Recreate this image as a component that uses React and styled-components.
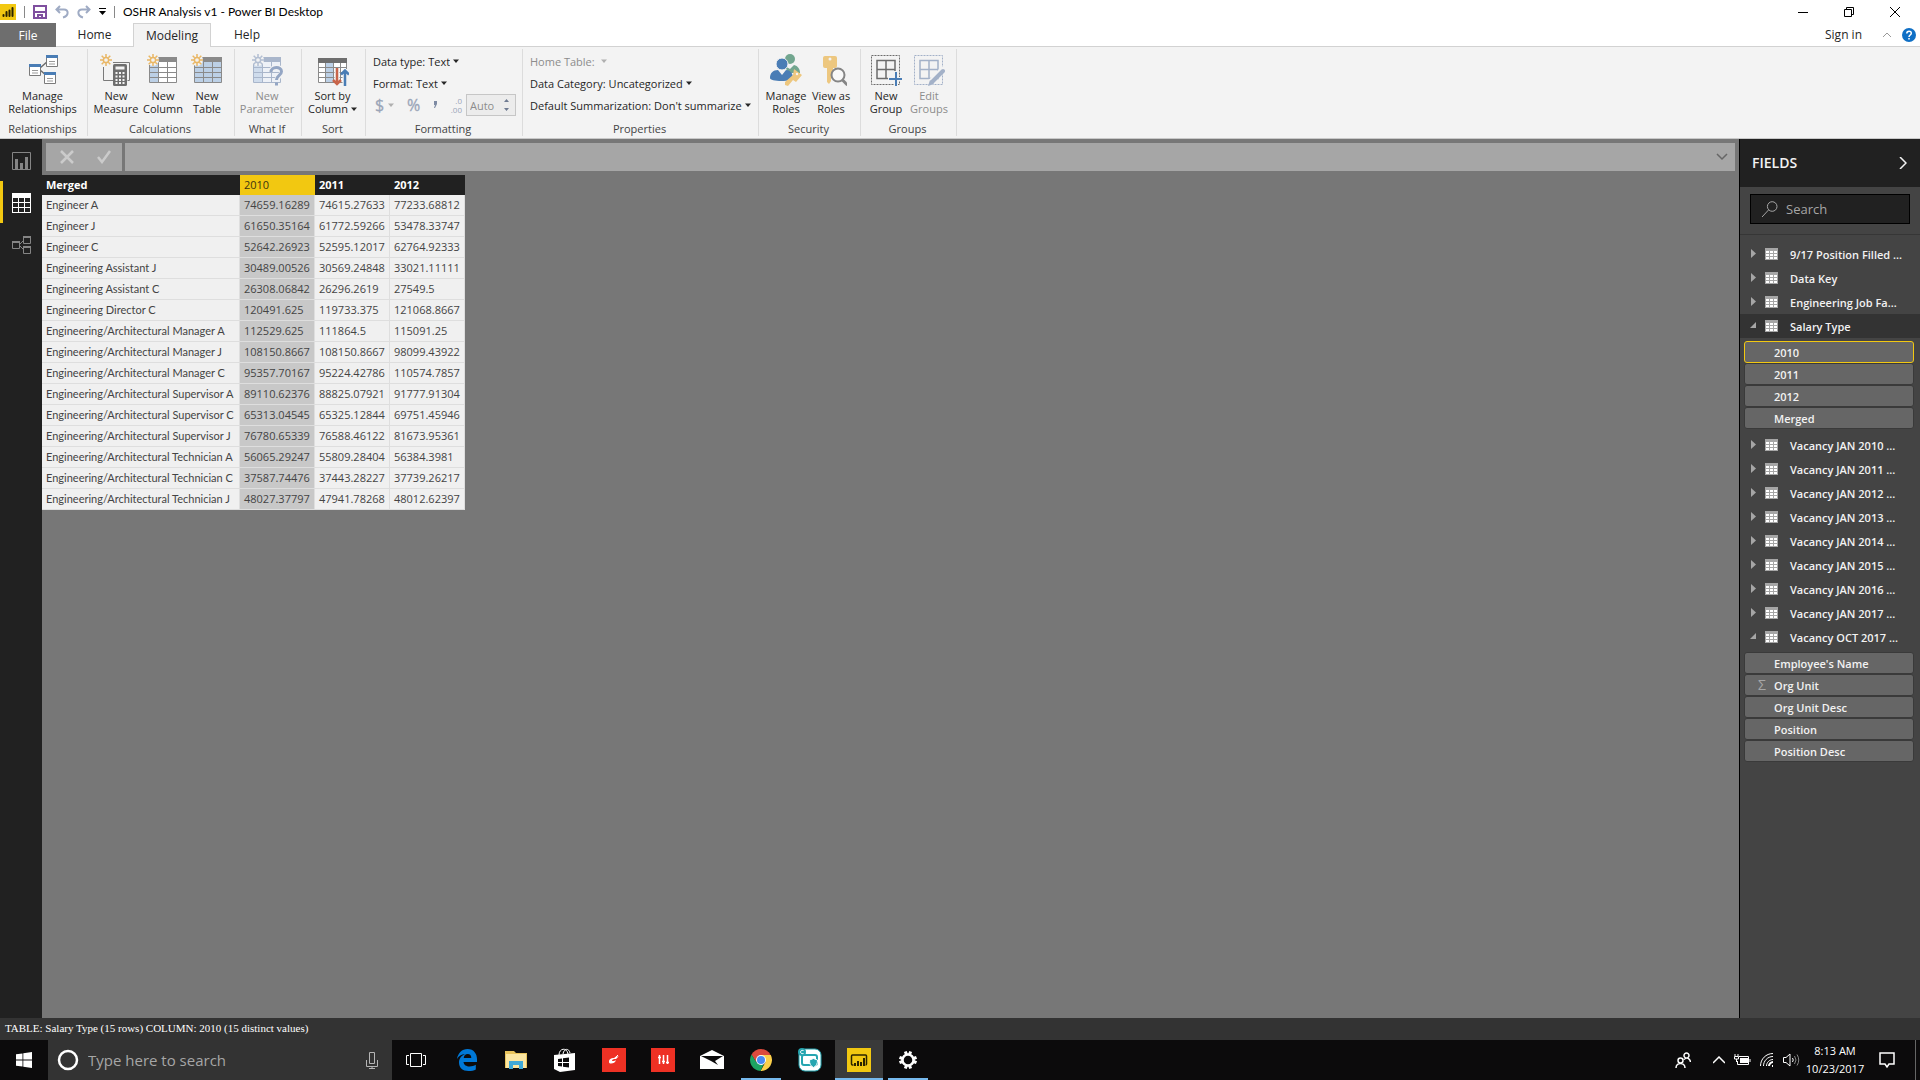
import React from "react";
import styled, { createGlobalStyle, css } from "styled-components";

const GlobalStyle = createGlobalStyle`
  * {
    box-sizing: border-box;
  }

  body {
    margin: 0;
    font-family: "Open Sans", "Noto Sans", sans-serif;
    font-size: 11px;
    color: #262626;
    background: #777;
  }

  button, input, select {
    margin: 0;
    padding: 0;
    border: 0;
    border-radius: 0;
    background: none;
    font: inherit;
    color: inherit;
    opacity: 1;
  }

  svg {
    display: block;
    flex: none;
  }
`;

const Window = styled.div`
  display: flex;
  flex-direction: column;
  min-height: 100vh;
`;

/* title bar */

const TitleBar = styled.header`
  display: flex;
  align-items: center;
  height: 23px;
  padding-right: 2px;
  background: #fff;
  color: #000;
`;

const QuickAccess = styled.div`
  display: flex;
  align-items: center;
  gap: 8px;
  margin-right: 8px;
`;

const IconButton = styled.button`
  display: flex;
  align-items: center;
  justify-content: center;
  color: ${(props) => props.$color || "inherit"};
`;

const Divider = styled.span`
  width: 1px;
  height: 12px;
  background: #888;
`;

const Title = styled.h1`
  flex: 1;
  margin: 0;
  font-family: Lato, "Open Sans", sans-serif;
  font-size: 12px;
  font-weight: 400;
`;

const WindowButton = styled(IconButton)`
  width: 46px;
  height: 22px;
`;

/* ribbon */

const TabBar = styled.nav`
  display: flex;
  align-items: stretch;
  height: 24px;
  background: #fff;
  border-bottom: 1px solid #d2d2d2;
`;

const Tab = styled.button`
  width: ${(props) => props.$width}px;
  font-size: 12px;

  ${(props) =>
    props.$file &&
    css`
      margin-bottom: -1px;
      background: #6e6e6e;
      color: #fff;
    `}

  ${(props) =>
    props.$active &&
    css`
      margin-bottom: -1px;
      border: 1px solid #d2d2d2;
      border-bottom: 0;
      background: #f3f3f3;
    `}
`;

const Account = styled.div`
  display: flex;
  align-items: center;
  gap: 10px;
  margin-left: auto;
  padding-right: 4px;
`;

const SignIn = styled.button`
  margin-right: 10px;
  font-size: 12px;
`;

const Ribbon = styled.section`
  display: flex;
  height: 92px;
  padding: 2px 0;
  background: #f3f3f3;
  border-bottom: 1px solid #c8c8c8;
`;

const Group = styled.section`
  display: flex;
  flex-direction: column;
  flex: none;
  width: ${(props) => props.$width}px;
  border-right: 1px solid #dcdcdc;
`;

const GroupBody = styled.div`
  display: flex;
  justify-content: center;
  flex: 1;
  padding-right: 2px;
`;

const GroupStack = styled.div`
  display: flex;
  flex-direction: column;
  flex: 1;
  padding: 1px 6px 0 7px;
`;

const GroupLabel = styled.h2`
  margin: 0;
  height: 14px;
  padding-right: 2px;
  line-height: 14px;
  font-size: 11px;
  font-weight: 400;
  text-align: center;
  color: #444;
`;

const Tool = styled.button`
  display: flex;
  flex-direction: column;
  align-items: center;
  width: ${(props) => props.$width}px;
  padding-top: 5px;
  line-height: 13px;
  white-space: nowrap;
  color: ${(props) => (props.disabled ? "#8c8c8c" : "#262626")};

  svg {
    margin-bottom: 3px;
  }
`;

const ToolLine = styled.span`
  display: flex;
  align-items: center;
  gap: 3px;

  svg {
    margin: 0;
  }
`;

const Choice = styled.label`
  display: flex;
  align-items: center;
  height: 22px;
  gap: 3px;
  white-space: nowrap;
  color: ${(props) => (props.$off ? "#8c8c8c" : "#262626")};

  select {
    appearance: none;
    field-sizing: content;
  }
`;

const FormatRow = styled.div`
  display: flex;
  align-items: center;
  gap: 4px;
  height: 22px;
  padding-left: 2px;
  color: #9aa5b8;
`;

const FormatButtons = styled.div`
  display: flex;
  align-items: center;
  justify-content: space-between;
  flex: 1;
`;

const FormatButton = styled.button`
  display: flex;
  align-items: center;
  gap: 4px;
  font-size: 16px;
  line-height: 20px;
  -webkit-text-stroke: 0.3px currentColor;
`;

const DecimalLabel = styled.span`
  display: flex;
  flex-direction: column;
  align-items: flex-end;
  font-size: 8px;
  line-height: 9px;
`;

const Spinner = styled.span`
  display: flex;
  align-items: center;
  flex: none;
  width: 50px;
  height: 22px;
  padding: 0 6px 0 3px;
  border: 1px solid #c6c6c6;
  background: #ececec;
  color: #6f7b92;

  input {
    flex: 1;
    min-width: 0;
    color: #8c8c8c;
  }
`;

/* work area */

const Workspace = styled.div`
  display: flex;
  flex: 1;
`;

const ViewBar = styled.nav`
  flex: none;
  width: 42px;
  background: #212121;
`;

const ViewButton = styled.button`
  display: flex;
  align-items: center;
  width: 100%;
  height: 42px;
  padding: 2px 0 0 9px;
  border-left: 3px solid ${(props) => (props.$active ? "#f2c811" : "transparent")};
  color: ${(props) => (props.$active ? "#fff" : "#858585")};
`;

const DataView = styled.main`
  flex: 1;
  min-width: 0;
  background: #777;
`;

const FormulaBar = styled.div`
  display: flex;
  gap: 3px;
  padding: 4px 4px 4px;
`;

const FormulaActions = styled.div`
  display: flex;
  align-items: center;
  justify-content: space-around;
  width: 76px;
  height: 28px;
  padding-left: 3px;
  background: #a6a6a6;
  color: #cbcbcb;
`;

const FormulaField = styled.div`
  display: flex;
  align-items: center;
  flex: 1;
  padding-right: 7px;
  background: #a6a6a6;
  color: #666;

  input {
    flex: 1;
    height: 100%;
    padding: 0 8px;
  }
`;

const DataTable = styled.table`
  table-layout: fixed;
  width: 423px;
  border-collapse: separate;
  border-spacing: 0;
  line-height: 16px;
  white-space: nowrap;
`;

const HeadCell = styled.th`
  width: ${(props) => props.$width}px;
  height: 20px;
  padding: 0 4px;
  text-align: left;
  font-weight: ${(props) => (props.$selected ? 400 : 700)};
  color: ${(props) => (props.$selected ? "#3c3410" : "#fff")};
  background: ${(props) => (props.$selected ? "#f2c811" : "#212121")};
`;

const Cell = styled.td`
  height: 21px;
  padding: 0 0 0 4px;
  font-family: ${(props) => (props.$name ? "Lato, sans-serif" : "inherit")};
  color: #444;
  background: ${(props) => (props.$selected ? "#c8c8c8" : "#f0f0f0")};
  border-right: 1px solid #dedede;
  border-bottom: 1px solid #dedede;
`;

/* fields pane */

const Pane = styled.aside`
  flex: none;
  width: 181px;
  border-left: 1px solid #000;
  background: #444;
  color: #f2f2f2;
`;

const PaneHeader = styled.div`
  display: flex;
  align-items: center;
  justify-content: space-between;
  height: 48px;
  padding: 0 13px 0 12px;
  background: #212121;
`;

const PaneTitle = styled.h2`
  margin: 0;
  font-size: 14px;
  line-height: 18px;
  font-weight: 600;
`;

const SearchArea = styled.div`
  padding: 7px 10px 10px;
  border-bottom: 1px solid #363636;
`;

const SearchBox = styled.label`
  display: flex;
  align-items: center;
  gap: 8px;
  height: 30px;
  padding: 0 11px;
  border: 1px solid #000;
  background: #212121;
  color: #a6a6a6;

  input {
    min-width: 0;
    width: 100%;
    font-size: 13px;
  }

  input::placeholder {
    color: #a6a6a6;
    opacity: 1;
  }
`;

const TableList = styled.ul`
  margin: 0;
  padding: 7px 0 0;
  list-style: none;
  font-weight: 600;
`;

const TableRow = styled.button`
  display: flex;
  align-items: center;
  width: 100%;
  height: 24px;
  padding-left: 10px;
  white-space: nowrap;
  background: ${(props) => (props.$active ? "#333" : "transparent")};

  svg + svg {
    margin: 0 12px 0 8px;
  }
`;

const FieldList = styled.ul`
  margin: 0;
  padding: 3px 6px 4px 4px;
  list-style: none;
`;

const Field = styled.button`
  display: flex;
  align-items: center;
  width: 100%;
  height: 22px;
  border: 1px solid ${(props) => (props.$selected ? "#f2c811" : "#3a3a3a")};
  border-radius: 3px;
  background: #666;
`;

const FieldMark = styled.span`
  width: 29px;
  padding-left: 13px;
  font-size: 14px;
  line-height: 16px;
  font-weight: 400;
  text-align: left;
  color: #a6a6a6;
`;

const StatusBar = styled.footer`
  height: 22px;
  padding-left: 5px;
  line-height: 21px;
  font-family: "Liberation Serif", serif;
  font-size: 11px;
  color: #fff;
  background: #333;
`;

/* taskbar */

const Taskbar = styled.footer`
  display: flex;
  height: 40px;
  background: #0c0b0c;
  color: #fff;
`;

const TaskButton = styled.button`
  display: flex;
  align-items: center;
  justify-content: center;
  width: 48px;
  margin-right: 1px;
  background: ${(props) => (props.$active ? "#3a3a3a" : "transparent")};
  border-bottom: 2px solid ${(props) => (props.$active ? "#76b9ed" : "transparent")};
  border-top: 2px solid transparent;

  ${(props) =>
    props.$running &&
    css`
      width: 40px;
      margin: 0 5px 0 4px;
      border-bottom-color: #76b9ed;
    `}
`;

const StartButton = styled(TaskButton)`
  margin-right: 0;
`;

const TaskViewButton = styled(TaskButton)`
  margin-right: 3px;
`;

const TaskSearch = styled.label`
  display: flex;
  align-items: center;
  width: 344px;
  padding: 0 14px 0 9px;
  background: #333;

  input {
    flex: 1;
    padding-left: 9px;
    font-size: 15px;
  }

  input::placeholder {
    color: #a6a6a6;
    opacity: 1;
  }
`;

const Tray = styled.div`
  display: flex;
  align-items: center;
  margin-left: auto;
  padding-right: 4px;
`;

const TrayIcons = styled.div`
  display: flex;
  align-items: center;
  gap: 9px;
  margin-right: 5px;
`;

const People = styled(IconButton)`
  margin-right: 13px;
`;

const Clock = styled.time`
  width: 60px;
  font-size: 11px;
  line-height: 18px;
  text-align: center;
  white-space: nowrap;
`;

const Notifications = styled(IconButton)`
  padding: 0 20px 0 14px;
  height: 100%;
  border-right: 1px solid #666;
`;

/* icons */

const Caret = ({ color = "#262626" }) => (
  <svg width="6" height="4" viewBox="0 0 6 4">
    <path d="M0 .5h6L3 4z" fill={color} />
  </svg>
);

const PowerBiLogo = () => (
  <svg width="16" height="16" viewBox="0 0 16 16">
    <path fill="#f2c811" d="M0 0h16v16H0z" />
    <path
      stroke="#2b2400"
      strokeWidth="2"
      strokeLinecap="round"
      d="M3.500 12v-1M6.500 12V8M9.500 12V6.500M12.500 12V4"
    />
  </svg>
);

const SaveIcon = () => (
  <svg width="14" height="14" viewBox="0 0 14 14">
    <path fill="none" stroke="#7f4f9f" strokeWidth="2" d="M1 1h12v12H1zM2 7h10" />
    <path fill="#7f4f9f" d="M4 9h6v4H8v-2H6v2H4z" />
  </svg>
);

const UndoIcon = ({ flip }) => (
  <svg width="14" height="14" viewBox="0 0 14 14">
    <path
      fill="none"
      stroke="#9fabc4"
      strokeWidth="2"
      transform={flip ? "matrix(-1 0 0 1 14 0)" : undefined}
      d="M5 1L1.500 4.500 5 8M2 4.500h7c5 0 5 6.500-1 8"
    />
  </svg>
);

const Sun = ({ x = 6, color = "#e9b765" }) => (
  <g transform={`translate(${x} 6)`} stroke={color} fill="none" strokeWidth="1.500">
    <circle r="2.600" />
    <path d="M0-6v3M0 3v3M-6 0h3M3 0h3M-4.300-4.300l2 2M2.300 2.300l2 2M-4.300 4.300l2-2M2.300-2.300l2-2" />
  </g>
);

const Grid = ({ x, y = 3, fill = "#fff", column = "#bcd0e6", line = "#8a8a8a" }) => (
  <g transform={`translate(${x} ${y})`}>
    <path fill={fill} d="M.5.5h27v25H.5z" />
    <path fill={column} d="M1 5h8v20H1z" />
    <path stroke={line} fill="none" d="M.5.5h27v25H.5zM9.500 5v20M18.500 5v20M1 10.500h26M1 15.500h26M1 20.500h26" />
    <path fill={line} d="M0 0h28v5H0z" />
  </g>
);

const ToolSvg = ({ children }) => (
  <svg width="32" height="32" viewBox="0 0 32 32">
    {children}
  </svg>
);

const MiniTable = ({ x, y }) => (
  <g transform={`translate(${x} ${y})`}>
    <path fill="#fff" stroke="#7a7a7a" d="M.5.5h11v11H.5z" />
    <path fill="#4a7db5" d="M0 0h12v3H0z" />
    <path stroke="#9a9a9a" d="M3 6.500h6M3 9h6" />
  </g>
);

const RelationshipsIcon = () => (
  <ToolSvg>
    <path stroke="#6c6c6c" strokeWidth="1.500" d="M13 14l8-7M13 16l7 6" />
    <MiniTable x={19} y={1} />
    <MiniTable x={2} y={10} />
    <MiniTable x={17} y={18} />
  </ToolSvg>
);

const MeasureIcon = () => (
  <ToolSvg>
    <path fill="none" stroke="#7a7a7a" d="M3.500 13v13.500H13M13 8.500h16.500V26.500h-2" />
    <Sun />
    <rect x="13" y="10" width="14" height="22" rx="1.500" fill="#6e6e6e" />
    <path fill="#f3f3f3" d="M15.500 12.500h9v3h-9z" />
    <path
      stroke="#f3f3f3"
      strokeWidth="2"
      strokeDasharray="2 1.500"
      d="M15.500 19h9M15.500 22.500h9M15.500 26h9M15.500 29h9"
    />
  </ToolSvg>
);

const ColumnIcon = () => (
  <ToolSvg>
    <Grid x={2} />
    <circle cx="6" cy="6" r="6" fill="#f3f3f3" />
    <Sun />
  </ToolSvg>
);

const TableIcon = () => (
  <ToolSvg>
    <Grid x={3} fill="#bcd0e6" />
    <circle cx="6" cy="6" r="6" fill="#f3f3f3" />
    <Sun />
  </ToolSvg>
);

const ParameterIcon = () => (
  <ToolSvg>
    <Grid x={2} fill="#edf1f7" column="#cfdcec" line="#a9b6cb" />
    <circle cx="7" cy="6" r="6" fill="#f3f3f3" />
    <Sun x={7} color="#b3bfd2" />
    <path fill="none" stroke="#f3f3f3" strokeWidth="5" d="M20 18c0-6 11-6 11-.5 0 4-5 4-5 8.500" />
    <path fill="none" stroke="#94a6c4" strokeWidth="3" d="M20 18c0-6 10.500-6 10.500-.5 0 4-5 4-5 8.500M25.500 28.500v3" />
  </ToolSvg>
);

const SortIcon = () => (
  <ToolSvg>
    <g transform="translate(1 4)">
      <path fill="#fff" stroke="#8a8a8a" d="M.5.5h28v24H.5z" />
      <path fill="#bcd0e6" d="M8 5h7v19H8z" />
      <path stroke="#8a8a8a" d="M7.500 5v19M15.500 5v19M22.500 5v19M1 9.500h27M1 14.500h27M1 19.500h27" />
      <path fill="#6e6e6e" d="M0 0h29v5H0z" />
    </g>
    <path fill="none" stroke="#f3f3f3" strokeWidth="5" d="M20 14v18M28 32V15" />
    <path fill="none" stroke="#c8644a" strokeWidth="2.500" d="M20 14v16M16 26l4 4 4-4" />
    <path fill="none" stroke="#4a7db5" strokeWidth="2.500" d="M28 32V17M24 20.500l4-4 4 4" />
  </ToolSvg>
);

const RolesIcon = () => (
  <ToolSvg>
    <circle cx="20" cy="5" r="5" fill="#72a68f" />
    <path fill="#72a68f" d="M15 12l5 3 4-4c4 1 6 4 6 8H18z" />
    <circle cx="12" cy="10" r="6" fill="#4a7db5" stroke="#f3f3f3" />
    <path fill="#4a7db5" d="M0 24c0-5 3-8 8-8l4 5 4-5c4 0 7 3 7 8 0 2-5 3-11.500 3S0 26 0 24z" />
    <path stroke="#f3f3f3" strokeWidth="6" d="M18 31l8-8" />
    <path fill="#edc77f" d="M24 15l8 6-6 7-3-2-5 6-3-1v-3l8-7z" />
    <circle cx="27" cy="20" r="1.200" fill="#f3f3f3" />
  </ToolSvg>
);

const ViewAsIcon = () => (
  <ToolSvg>
    <rect x="8" y="2" width="14" height="12" rx="2" fill="#edc77f" />
    <path fill="#edc77f" d="M12 14h6v5h-2v8l-2 3-2-2z" />
    <circle cx="15" cy="5" r="1.500" fill="#f3f3f3" />
    <circle cx="23" cy="21" r="6.500" fill="#f8f8f8" stroke="#858585" strokeWidth="2" />
    <path stroke="#858585" strokeWidth="3" d="M27.500 26l5 5" />
  </ToolSvg>
);

const GroupIcon = ({ edit }) => (
  <ToolSvg>
    <g fill="none" stroke={edit ? "#a3b1c8" : "#6c6c6c"}>
      <path strokeDasharray="2 1" d="M1.500 1.500h28v29h-28z" />
      <path strokeWidth="1.500" d="M7 6.500h18v18H7zM16 6.500v18M7 15.500h18" />
    </g>
    {edit ? (
      <>
        <path stroke="#f3f3f3" strokeWidth="6" d="M31 14L16 30" />
        <path stroke="#a3b1c8" strokeWidth="4" strokeLinecap="round" d="M30 17L19 28" />
        <path fill="#a3b1c8" d="M17 26l4 4-6 2z" />
      </>
    ) : (
      <>
        <path stroke="#f3f3f3" strokeWidth="4" d="M26 17v15M18 25h14" />
        <path stroke="#4a7db5" strokeWidth="2" d="M26 18v14M19 25h13" />
      </>
    )}
  </ToolSvg>
);

const ReportView = () => (
  <svg width="19" height="19" viewBox="0 0 19 19">
    <path fill="none" stroke="currentColor" d="M.5.5h18v17H.5z" />
    <path stroke="currentColor" strokeWidth="3" d="M4.500 17V7M9.500 17v-6M14.500 17V5" />
  </svg>
);

const TableView = () => (
  <svg width="19" height="20" viewBox="0 0 19 20">
    <path fill="currentColor" d="M0 0h19v20H0z" />
    <path
      fill="#212121"
      d="M1 5h5v4H1zM7 5h5v4H7zM13 5h5v4h-5zM1 10h5v4H1zM7 10h5v4H7zM13 10h5v4h-5zM1 15h5v4H1zM7 15h5v4H7zM13 15h5v4h-5z"
    />
  </svg>
);

const ModelView = () => (
  <svg width="19" height="18" viewBox="0 0 19 18">
    <path fill="none" stroke="currentColor" d="M.5 5.500h7v7h-7zM11.500.5h7v7h-7zM11.500 10.500h7v7h-7zM8 8l3-3M8 10l3 3" />
    <path fill="currentColor" d="M0 5h8v2H0zM11 0h8v2h-8zM11 10h8v2h-8z" />
  </svg>
);

const Line = ({ d, w = 12, h = 12, weight = 1 }) => (
  <svg width={w} height={h} viewBox={`0 0 ${w} ${h}`}>
    <path fill="none" stroke="currentColor" strokeWidth={weight} d={d} />
  </svg>
);

const Expander = ({ open }) => (
  <svg width="7" height="10" viewBox="0 0 7 10">
    <path fill="#a6a6a6" d={open ? "M6 1v6H0z" : "M1 0l5 4.500L1 9z"} />
  </svg>
);

const FieldTableIcon = () => (
  <svg width="13" height="12" viewBox="0 0 13 12">
    <path fill="#a6a6a6" d="M0 0h13v12H0z" />
    <path fill="#fff" d="M1 3h3v2H1zM5 3h3v2H5zM9 3h3v2H9zM1 6h3v2H1zM5 6h3v2H5zM9 6h3v2H9zM1 9h3v2H1zM5 9h3v2H5zM9 9h3v2H9z" />
  </svg>
);

const WindowsLogo = () => (
  <svg width="16" height="16" viewBox="0 0 16 16">
    <path fill="#fff" d="M0 2.300L6.500 1.400v6.200H0zM7.300 1.300L16 0v7.600H7.300zM0 8.400h6.500v6.200L0 13.700zM7.300 8.400H16V16l-8.700-1.300z" />
  </svg>
);

const EdgeIcon = () => (
  <svg width="22" height="22" viewBox="0 0 22 22">
    <path
      fill="#0078d7"
      d="M1 10C2 4 6 0 11.500 0 18 0 21 5 21 10v3H7.500c.3 3 3 4.500 6 4.500 2.500 0 4.500-.6 6.300-1.700v4.600C18 21.500 15.500 22 12.500 22 6.500 22 3 18.500 3 13.500 3 9.500 5.500 6.500 9 5 5.500 5.300 2.500 7 1 10zm6.700-1h7.600c0-2.500-1.300-4-3.600-4-2.200 0-3.700 1.500-4 4z"
    />
  </svg>
);

const ExplorerIcon = () => (
  <svg width="22" height="20" viewBox="0 0 22 20">
    <path fill="#e9c45c" d="M0 1h9l2 2h11v15H0z" />
    <path fill="#fbe6a2" d="M1 4h20v14H1z" />
    <path fill="#3fa9d8" d="M4 11h14v8h-4v-4H8v4H4z" />
  </svg>
);

const StoreIcon = () => (
  <svg width="22" height="24" viewBox="0 0 22 24">
    <path fill="none" stroke="#fff" d="M5 7c0-7 8-8 9-1M9 6c1-6 6-6 7-1" />
    <path fill="#fff" d="M0 7l21-2v17L6 24l-6-3z" />
    <path fill="#0c0b0c" d="M4 11l4-.5V14H4zM9 10.300l6-.8V14H9zM4 15h4v3.500L4 18zM9 15h6v4.500l-6-.8z" />
  </svg>
);

const RedTile = ({ bars }) => (
  <svg width="24" height="24" viewBox="0 0 24 24">
    <path fill="#ee3124" d="M0 0h24v24H0z" />
    {bars ? (
      <path stroke="#fff" strokeWidth="1.500" d="M8.500 7v9M12.500 7v9M16.500 7v9M7 9.500h3M11 13.500h3M15 14.500h3" />
    ) : (
      <>
        <path fill="#fff" d="M7 14c0-3 2-4 5-4l4-3-1 2 2-1-3 3c-3 0-4 .5-4 1.800 1 .7 3 0 4-.8-.5 3.500-7 5-7 2z" />
        <path stroke="#fff" d="M13 10l3-3" />
      </>
    )}
  </svg>
);

const MailIcon = () => (
  <svg width="24" height="20" viewBox="0 0 24 20">
    <path fill="#fff" d="M0 6l12-6 12 6v13H0z" />
    <path fill="#0c0b0c" d="M1 6h22l-8 5 3 4-7-4z" />
  </svg>
);

const ChromeIcon = () => (
  <svg width="22" height="22" viewBox="0 0 22 22">
    <path fill="#dd4b3e" d="M11 11L1.500 5.500A11 11 0 0 1 20.500 5.500z" />
    <path fill="#dd4b3e" d="M1.500 5.500L6 13l5-8h9.500z" />
    <path fill="#fcd04b" d="M11 6h9.800A11 11 0 0 1 10.500 22l5-9z" />
    <path fill="#1da462" d="M1.500 5.500l5 8 7 2L10.500 22A11 11 0 0 1 1.500 5.500z" />
    <circle cx="11" cy="11" r="5" fill="#fff" />
    <circle cx="11" cy="11" r="4" fill="#4a8af4" />
  </svg>
);

const SyncIcon = () => (
  <svg width="24" height="24" viewBox="0 0 24 24">
    <rect x="1" y="1" width="22" height="22" rx="6" fill="#fff" stroke="#26a5b0" />
    <rect x="4" y="7" width="15" height="10" rx="2" fill="none" stroke="#26a5b0" strokeWidth="2" />
    <circle cx="4" cy="4" r="4" fill="#26a5b0" />
    <path fill="none" stroke="#fff" d="M5.500 2.500c-4-1-4 4 0 3" />
    <path fill="#26a5b0" stroke="#fff" d="M11.500 12l4-1.500 4 1.500c0 4-1 6-4 7.500-3-1.500-4-3.500-4-7.500z" />
  </svg>
);

const PowerBiTile = () => (
  <svg width="24" height="24" viewBox="0 0 24 24">
    <path fill="#f2c811" d="M0 0h24v24H0z" />
    <path
      fill="none"
      stroke="#2b2400"
      strokeWidth="1.500"
      d="M6.500 17H5.500Q4.500 17 4.500 16V8Q4.500 7 5.500 7h13Q19.500 7 19.500 8v8q0 1-1 1"
    />
    <path stroke="#2b2400" strokeWidth="2" d="M8 18v-3M11 18v-5M14 18v-4M17 18v-8" />
  </svg>
);

const GearIcon = () => (
  <svg width="20" height="20" viewBox="0 0 20 20">
    <circle cx="10" cy="10" r="5.500" fill="none" stroke="#fff" strokeWidth="2.500" />
    <path
      stroke="#fff"
      strokeWidth="3"
      d="M8.500 4.500L7.300 1.500M11.500 4.500l1.200-3M8.500 15.500l-1.200 3M11.500 15.500l1.200 3M4.500 8.500l-3-1.200M4.500 11.500l-3 1.200M15.500 8.500l3-1.200M15.500 11.500l3 1.200"
    />
  </svg>
);

const years = ["2010", "2011", "2012"];

const rows = [
  ["Engineer A", "74659.16289", "74615.27633", "77233.68812"],
  ["Engineer J", "61650.35164", "61772.59266", "53478.33747"],
  ["Engineer C", "52642.26923", "52595.12017", "62764.92333"],
  ["Engineering Assistant J", "30489.00526", "30569.24848", "33021.11111"],
  ["Engineering Assistant C", "26308.06842", "26296.2619", "27549.5"],
  ["Engineering Director C", "120491.625", "119733.375", "121068.8667"],
  ["Engineering/Architectural Manager A", "112529.625", "111864.5", "115091.25"],
  ["Engineering/Architectural Manager J", "108150.8667", "108150.8667", "98099.43922"],
  ["Engineering/Architectural Manager C", "95357.70167", "95224.42786", "110574.7857"],
  ["Engineering/Architectural Supervisor A", "89110.62376", "88825.07921", "91777.91304"],
  ["Engineering/Architectural Supervisor C", "65313.04545", "65325.12844", "69751.45946"],
  ["Engineering/Architectural Supervisor J", "76780.65339", "76588.46122", "81673.95361"],
  ["Engineering/Architectural Technician A", "56065.29247", "55809.28404", "56384.3981"],
  ["Engineering/Architectural Technician C", "37587.74476", "37443.28227", "37739.26217"],
  ["Engineering/Architectural Technician J", "48027.37797", "47941.78268", "48012.62397"]
];

const tables = [
  { name: "9/17 Position Filled ..." },
  { name: "Data Key" },
  { name: "Engineering Job Fa..." },
  { name: "Salary Type", active: true, fields: ["2010", "2011", "2012", "Merged"] },
  { name: "Vacancy JAN 2010 ..." },
  { name: "Vacancy JAN 2011 ..." },
  { name: "Vacancy JAN 2012 ..." },
  { name: "Vacancy JAN 2013 ..." },
  { name: "Vacancy JAN 2014 ..." },
  { name: "Vacancy JAN 2015 ..." },
  { name: "Vacancy JAN 2016 ..." },
  { name: "Vacancy JAN 2017 ..." },
  {
    name: "Vacancy OCT 2017 ...",
    fields: ["Employee's Name", "Org Unit", "Org Unit Desc", "Position", "Position Desc"]
  }
];

const RibbonTool = ({ icon, top, bottom, width, disabled, menu }) => (
  <Tool $width={width} disabled={disabled}>
    {icon}
    <span>{top}</span>
    <ToolLine>
      {bottom}
      {menu && <Caret />}
    </ToolLine>
  </Tool>
);

const RibbonChoice = ({ label, value, disabled }) => (
  <Choice $off={disabled}>
    {label}
    <select disabled={disabled} defaultValue={value}>
      <option>{value}</option>
    </select>
    <Caret color={disabled ? "#b0b0b0" : "#262626"} />
  </Choice>
);

const ModelingRibbon = () => (
  <Ribbon>
    <Group $width={88}>
      <GroupBody>
        <RibbonTool width={84} icon={<RelationshipsIcon />} top="Manage" bottom="Relationships" />
      </GroupBody>
      <GroupLabel>Relationships</GroupLabel>
    </Group>
    <Group $width={147}>
      <GroupBody>
        <RibbonTool width={50} icon={<MeasureIcon />} top="New" bottom="Measure" />
        <RibbonTool width={44} icon={<ColumnIcon />} top="New" bottom="Column" />
        <RibbonTool width={44} icon={<TableIcon />} top="New" bottom="Table" />
      </GroupBody>
      <GroupLabel>Calculations</GroupLabel>
    </Group>
    <Group $width={67}>
      <GroupBody>
        <RibbonTool width={60} disabled icon={<ParameterIcon />} top="New" bottom="Parameter" />
      </GroupBody>
      <GroupLabel>What If</GroupLabel>
    </Group>
    <Group $width={64}>
      <GroupBody>
        <RibbonTool width={60} menu icon={<SortIcon />} top="Sort by" bottom="Column" />
      </GroupBody>
      <GroupLabel>Sort</GroupLabel>
    </Group>
    <Group $width={157}>
      <GroupStack>
        <RibbonChoice label="Data type:" value="Text" />
        <RibbonChoice label="Format:" value="Text" />
        <FormatRow>
          <FormatButtons>
            <FormatButton disabled>
              $ <Caret color="#b0b0b0" />
            </FormatButton>
            <FormatButton disabled>%</FormatButton>
            <FormatButton disabled aria-label="Thousands separator">
              <svg width="5" height="8" viewBox="0 0 5 8">
                <path fill="#7d8aa3" d="M1 0h3v3L2 7H1l1-3H1z" />
              </svg>
            </FormatButton>
            <DecimalLabel>
              <span>.0</span>
              <span>.00</span>
            </DecimalLabel>
          </FormatButtons>
          <Spinner>
            <input aria-label="Decimal places" defaultValue="Auto" disabled />
            <svg width="5" height="12" viewBox="0 0 5 12">
              <path fill="currentColor" d="M0 3l2.500-3L5 3zM0 9h5l-2.500 3z" />
            </svg>
          </Spinner>
        </FormatRow>
      </GroupStack>
      <GroupLabel>Formatting</GroupLabel>
    </Group>
    <Group $width={236}>
      <GroupStack>
        <RibbonChoice label="Home Table:" value="" disabled />
        <RibbonChoice label="Data Category:" value="Uncategorized" />
        <RibbonChoice label="Default Summarization:" value="Don't summarize" />
      </GroupStack>
      <GroupLabel>Properties</GroupLabel>
    </Group>
    <Group $width={102}>
      <GroupBody>
        <RibbonTool width={45} icon={<RolesIcon />} top="Manage" bottom="Roles" />
        <RibbonTool width={45} icon={<ViewAsIcon />} top="View as" bottom="Roles" />
      </GroupBody>
      <GroupLabel>Security</GroupLabel>
    </Group>
    <Group $width={96}>
      <GroupBody>
        <RibbonTool width={43} icon={<GroupIcon />} top="New" bottom="Group" />
        <RibbonTool width={43} disabled icon={<GroupIcon edit />} top="Edit" bottom="Groups" />
      </GroupBody>
      <GroupLabel>Groups</GroupLabel>
    </Group>
  </Ribbon>
);

const FieldsPane = () => (
  <Pane>
    <PaneHeader>
      <PaneTitle>FIELDS</PaneTitle>
      <IconButton aria-label="Collapse pane">
        <Line w={8} h={12} weight={1.5} d="M1 0l6 6-6 6" />
      </IconButton>
    </PaneHeader>
    <SearchArea>
      <SearchBox>
        <Line w={16} h={16} d="M6.500 9L0 16M15 5.500a4.800 4.800 0 1 1-9.600 0a4.800 4.800 0 1 1 9.600 0" />
        <input type="search" aria-label="Search fields" placeholder="Search" />
      </SearchBox>
    </SearchArea>
    <TableList>
      {tables.map((table) => (
        <li key={table.name}>
          <TableRow $active={table.active}>
            <Expander open={!!table.fields} />
            <FieldTableIcon />
            {table.name}
          </TableRow>
          {table.fields && (
            <FieldList>
              {table.fields.map((field) => (
                <li key={field}>
                  <Field $selected={field === "2010"}>
                    <FieldMark>{field === "Org Unit" ? "Σ" : ""}</FieldMark>
                    {field}
                  </Field>
                </li>
              ))}
            </FieldList>
          )}
        </li>
      ))}
    </TableList>
  </Pane>
);

const WindowsTaskbar = () => (
  <Taskbar>
    <StartButton aria-label="Start">
      <WindowsLogo />
    </StartButton>
    <TaskSearch>
      <svg width="22" height="22" viewBox="0 0 22 22">
        <circle cx="11" cy="11" r="9" fill="none" stroke="#fff" strokeWidth="2.500" />
      </svg>
      <input aria-label="Windows search" placeholder="Type here to search" />
      <svg width="12" height="17" viewBox="0 0 12 17" fill="none" stroke="#b5b5b5">
        <path d="M3.500.5h5v11h-5zM.5 8v6.500h11V8M6 14v3M3 16.500h6" />
      </svg>
    </TaskSearch>
    <TaskViewButton aria-label="Task view">
      <Line w={20} h={16} d="M4.500 1.500h11v13h-11zM3 3.500H.5v9H3M17 3.500h2.500v9H17" />
    </TaskViewButton>
    <TaskButton aria-label="Edge">
      <EdgeIcon />
    </TaskButton>
    <TaskButton aria-label="File Explorer">
      <ExplorerIcon />
    </TaskButton>
    <TaskButton aria-label="Store">
      <StoreIcon />
    </TaskButton>
    <TaskButton aria-label="Assistant">
      <RedTile />
    </TaskButton>
    <TaskButton aria-label="Settings panel">
      <RedTile bars />
    </TaskButton>
    <TaskButton aria-label="Mail">
      <MailIcon />
    </TaskButton>
    <TaskButton $running aria-label="Chrome">
      <ChromeIcon />
    </TaskButton>
    <TaskButton aria-label="Sync">
      <SyncIcon />
    </TaskButton>
    <TaskButton $active aria-label="Power BI Desktop">
      <PowerBiTile />
    </TaskButton>
    <TaskButton $running aria-label="Settings">
      <GearIcon />
    </TaskButton>
    <Tray>
      <TrayIcons>
        <People aria-label="People">
          <Line
            w={16}
            h={16}
            weight={1.5}
            d="M8 8.500a2.500 2.500 0 1 1-5 0a2.500 2.500 0 1 1 5 0M1 16c0-6 9-6 9 0M14 3.500a2.500 2.500 0 1 1-5 0a2.500 2.500 0 1 1 5 0M9 7.500c3-3 6-1 6.500 2.500"
          />
        </People>
        <IconButton aria-label="Show hidden icons">
          <Line w={12} h={8} weight={1.5} d="M0 7l6-6 6 6" />
        </IconButton>
        <svg width="17" height="12" viewBox="0 0 17 12">
          <path fill="none" stroke="#fff" d="M5 2.500h9.500v8H3.500V7M1 0v2M4 0v2M.5 2.500h4V5h-4zM2.500 5v3M16 5v3" />
          <path fill="#fff" d="M6 4h8v5H6z" />
        </svg>
        <svg width="14" height="14" viewBox="0 0 14 14" fill="none" stroke="#fff">
          <path d="M.5 13C.5 6 6 .5 13 .5M3.500 13c0-5 4-9.500 9.500-9.500M6.500 13c0-3.500 3-6.500 6.500-6.500" />
          <path d="M9 13c0-2 2-4 4-4M12 13h1" strokeWidth="2" />
        </svg>
        <svg width="17" height="14" viewBox="0 0 17 14" fill="none" stroke="#fff">
          <path d="M.5 4.500H3l4-3.500v12L3 9.500H.5zM9.500 5q1.500 2 0 4" />
          <path stroke="#888" d="M11.500 3q3 4 0 8M14 1.500q3.500 5.500 0 11" />
        </svg>
      </TrayIcons>
      <Clock>
        8:13 AM
        <br />
        10/23/2017
      </Clock>
      <Notifications aria-label="Notifications">
        <Line w={16} h={17} weight={1.5} d="M1 1h14v11h-5l-2 3-2-3H1z" />
      </Notifications>
    </Tray>
  </Taskbar>
);

const App = () => (
  <Window>
    <GlobalStyle />
    <TitleBar>
      <QuickAccess>
        <PowerBiLogo />
        <Divider />
        <IconButton aria-label="Save">
          <SaveIcon />
        </IconButton>
        <IconButton aria-label="Undo">
          <UndoIcon />
        </IconButton>
        <IconButton aria-label="Redo">
          <UndoIcon flip />
        </IconButton>
        <IconButton aria-label="Customize quick access">
          <svg width="7" height="7" viewBox="0 0 7 7">
            <path d="M0 0h7v1H0zM0 3h7L3.500 7z" />
          </svg>
        </IconButton>
        <Divider />
      </QuickAccess>
      <Title>OSHR Analysis v1 - Power BI Desktop</Title>
      <WindowButton aria-label="Minimize">
        <Line d="M1 6.500h10" />
      </WindowButton>
      <WindowButton aria-label="Restore">
        <Line d="M1.500 3.500h7v7h-7zM3.500 3V1.500h7v7H9" />
      </WindowButton>
      <WindowButton aria-label="Close">
        <Line d="M1 1l10 10M11 1L1 11" />
      </WindowButton>
    </TitleBar>
    <TabBar>
      <Tab $width={56} $file>
        File
      </Tab>
      <Tab $width={77}>Home</Tab>
      <Tab $width={78} $active>
        Modeling
      </Tab>
      <Tab $width={72}>Help</Tab>
      <Account>
        <SignIn>Sign in</SignIn>
        <IconButton aria-label="Collapse ribbon" $color="#999">
          <Line w={10} h={6} d="M1 5l4-4 4 4" />
        </IconButton>
        <IconButton aria-label="Help">
          <svg width="14" height="14" viewBox="0 0 14 14">
            <circle cx="7" cy="7" r="7" fill="#0f6fc5" />
            <path fill="none" stroke="#fff" strokeWidth="1.500" d="M4.800 5.500c0-3 4.500-3 4.500-.3C9.300 7 7 7 7 9M7 10v1.500" />
          </svg>
        </IconButton>
      </Account>
    </TabBar>
    <ModelingRibbon />
    <Workspace>
      <ViewBar>
        <ViewButton aria-label="Report view">
          <ReportView />
        </ViewButton>
        <ViewButton $active aria-label="Data view">
          <TableView />
        </ViewButton>
        <ViewButton aria-label="Relationships view">
          <ModelView />
        </ViewButton>
      </ViewBar>
      <DataView>
        <FormulaBar>
          <FormulaActions>
            <IconButton aria-label="Cancel">
              <Line w={14} h={14} weight={2.5} d="M1 1l12 12M13 1L1 13" />
            </IconButton>
            <IconButton aria-label="Accept">
              <Line w={14} h={14} weight={2.5} d="M1 7l4 5 8-11" />
            </IconButton>
          </FormulaActions>
          <FormulaField>
            <input aria-label="Formula" />
            <IconButton aria-label="Expand formula bar">
              <Line w={12} h={8} weight={1.5} d="M1 1l5 5 5-5" />
            </IconButton>
          </FormulaField>
        </FormulaBar>
        <DataTable>
          <thead>
            <tr>
              <HeadCell $width={198}>Merged</HeadCell>
              {years.map((year, index) => (
                <HeadCell key={year} $width={75} $selected={index === 0}>
                  {year}
                </HeadCell>
              ))}
            </tr>
          </thead>
          <tbody>
            {rows.map((row) => (
              <tr key={row[0]}>
                {row.map((value, index) => (
                  <Cell key={index} $name={index === 0} $selected={index === 1}>
                    {value}
                  </Cell>
                ))}
              </tr>
            ))}
          </tbody>
        </DataTable>
      </DataView>
      <FieldsPane />
    </Workspace>
    <StatusBar>TABLE: Salary Type (15 rows) COLUMN: 2010 (15 distinct values)</StatusBar>
    <WindowsTaskbar />
  </Window>
);

export default App;
